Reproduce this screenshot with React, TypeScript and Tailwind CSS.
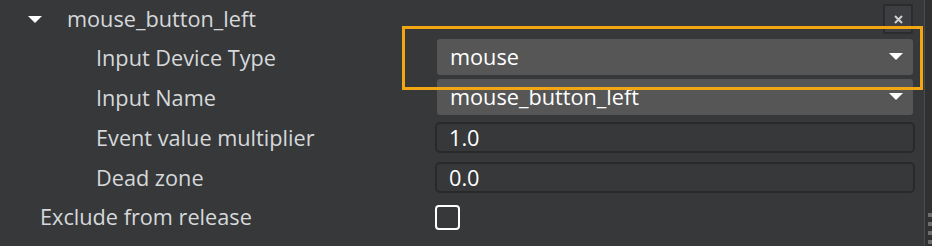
import React from "react";

const font = { fontFamily: '"Open Sans", "Noto Sans", sans-serif' };

function Arrow() {
  return (
    <svg width="14" height="7" viewBox="0 0 14 7" className="shrink-0">
      <path d="M0 0 H14 L7 7 Z" fill="#ffffff" />
    </svg>
  );
}

export default function App() {
  return (
    <div
      className="relative flex w-[932px] h-[246px] bg-[#37383a] overflow-hidden text-[21.7px] leading-none"
      style={font}
    >
      <div className="flex flex-col w-[924px]">
        {/* header row */}
        <div className="flex items-center h-[38px] pl-[28px] pr-[11px]">
          <Arrow />
          <span className="ml-[25px] text-[#d6d8db] pb-[1px]">mouse_button_left</span>
          <div className="ml-auto w-[30px] h-[30px] bg-[#2b2c2e] p-[2px] rounded-[2px]">
            <div className="w-full h-full bg-[#3d3e41] flex items-center justify-center">
              <svg width="9" height="9" viewBox="0 0 9 9">
                <path d="M1 1 L8 8 M8 1 L1 8" stroke="#d0d0d0" strokeWidth="2" />
              </svg>
            </div>
          </div>
        </div>

        {/* Input Device Type */}
        <div className="flex items-center h-[40px]">
          <span className="w-[437px] pl-[96px] text-[#d6d8db]">Input Device Type</span>
          <div className="flex items-center w-[476px] h-[36px] bg-[#565656] rounded-[3px] pl-[13px] pr-[10px] mb-[3px]">
            <span className="text-white">mouse</span>
            <span className="ml-auto"><Arrow /></span>
          </div>
        </div>

        {/* Input Name */}
        <div className="flex items-center h-[40px]">
          <span className="w-[437px] pl-[96px] text-[#d6d8db]">Input Name</span>
          <div className="flex items-center w-[476px] h-[36px] bg-[#565656] rounded-[3px] pl-[13px] pr-[10px] mb-[3px]">
            <span className="text-white">mouse_button_left</span>
            <span className="ml-auto"><Arrow /></span>
          </div>
        </div>

        {/* Event value multiplier */}
        <div className="flex items-center h-[40px]">
          <span className="w-[435px] pl-[96px] text-[#d6d8db]">Event value multiplier</span>
          <div className="flex items-center w-[480px] h-[31px] bg-[#37383a] border-2 border-[#28292b] rounded-[5px] pl-[12px] mb-[1px]">
            <span className="text-white">1.0</span>
          </div>
        </div>

        {/* Dead zone */}
        <div className="flex items-center h-[40px]">
          <span className="w-[435px] pl-[96px] text-[#d6d8db]">Dead zone</span>
          <div className="flex items-center w-[480px] h-[31px] bg-[#37383a] border-2 border-[#28292b] rounded-[5px] pl-[12px] mb-[1px]">
            <span className="text-white">0.0</span>
          </div>
        </div>

        {/* Exclude from release */}
        <div className="flex items-center h-[38px]">
          <span className="w-[435px] pl-[40px] text-[#d6d8db]">Exclude from release</span>
          <div className="w-[25px] h-[25px] border-2 border-white rounded-[4px]" />
        </div>
      </div>

      {/* scrollbar */}
      <div className="flex flex-col w-[8px] h-full border-l border-[#4a4b4d] bg-[#303133]">
        <div className="mt-auto mb-[2px] flex flex-col items-center gap-[5px] pl-[2px]">
          <div className="w-[4px] h-[4px] bg-[#6e6e6e]" />
          <div className="w-[4px] h-[4px] bg-[#6e6e6e]" />
          <div className="w-[4px] h-[4px] bg-[#6e6e6e]" />
          <div className="w-[4px] h-[4px] bg-[#6e6e6e]" />
        </div>
      </div>

      {/* highlight overlay */}
      <div className="absolute left-[402px] top-[26px] w-[521px] h-[64px] border-[3px] border-[#f2a712] pointer-events-none" />
    </div>
  );
}
